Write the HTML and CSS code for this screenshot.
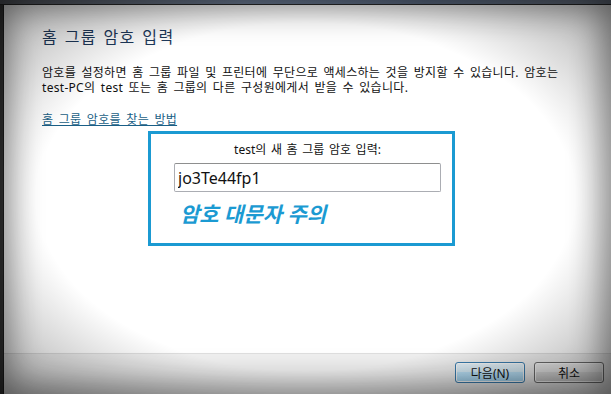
FILE: index.html
```html
<!DOCTYPE html>
<html lang="ko">
  <head>
    <meta charset="UTF-8" />
    <meta name="viewport" content="width=device-width, initial-scale=1.0" />
    <title>홈 그룹 암호 입력</title>
    <link rel="stylesheet" href="styles.css">
  </head>
  <body>
    <div class="topbar"></div>

    <div class="window">
      <div class="main">
        <h1>홈 그룹 암호 입력</h1>
        <p class="desc">
          암호를 설정하면 홈 그룹 파일 및 프린터에 무단으로 액세스하는 것을 방지할 수 있습니다. 암호는<br>
          test-PC의 test 또는 홈 그룹의 다른 구성원에게서 받을 수 있습니다.
        </p>
        <a class="help-link" href="#">홈 그룹 암호를 찾는 방법</a>

        <!-- highlighted area -->
        <div class="highlight">
          <div class="field">
            <label for="pw">test의 새 홈 그룹 암호 입력:</label>
            <input id="pw" type="text" value="jo3Te44fp1">
            <p class="caution">암호 대문자 주의</p>
          </div>
        </div>
      </div>

      <footer>
        <button class="btn btn-default">다음(N)</button>
        <button class="btn">취소</button>
      </footer>
    </div>

    <div class="vignette"></div>
  </body>
</html>
```

FILE: styles.css
```css
* {
  margin: 0;
  padding: 0;
  box-sizing: border-box;
}

body {
  font-family: "Noto Sans", "Noto Sans CJK KR", sans-serif;
  font-size: 12px;
  color: #111;
  background-color: #3a3a3a;
  width: 611px;
  height: 394px;
  overflow: hidden;
  display: flex;
  flex-direction: column;
}

.topbar {
  height: 5px;
  background: linear-gradient(90deg, #5c5f66, #6f7f98 40%, #5f6f88 70%, #707a8a);
  border-bottom: 1px solid #2a2a2a;
}

.window {
  flex: 1;
  margin-left: 3px;
  border-left: 1px solid #222;
  background-color: #fff;
  display: flex;
  flex-direction: column;
}

.main {
  flex: 1;
  padding-left: 38px;
}

h1 {
  margin-top: 22px;
  font-size: 16px;
  line-height: 21px;
  font-weight: 400;
  letter-spacing: 1.4px;
  word-spacing: 1px;
  color: #1e395b;
}

.desc {
  margin-top: 17px;
  line-height: 15px;
  letter-spacing: 0.3px;
  word-spacing: 2px;
}

.help-link {
  display: inline-block;
  margin-top: 17px;
  line-height: 15px;
  color: #1a5f86;
  letter-spacing: 0.3px;
  word-spacing: 2px;
}

.highlight {
  margin-top: 3px;
  margin-left: 106px;
  width: 307px;
  height: 115px;
  border: 3px solid #1b9ad2;
  padding: 8px 0 0 23px;
}

.field {
  width: 267px;
  display: flex;
  flex-direction: column;
}

.field label {
  text-align: center;
  line-height: 15px;
  word-spacing: 1.5px;
}

.field input {
  margin-top: 6px;
  height: 29px;
  border: 1px solid #abadb3;
  border-top-color: #8e8f8f;
  border-radius: 2px;
  padding: 0 3px;
  font-family: "Noto Sans", sans-serif;
  font-size: 16px;
  color: #111;
  outline: none;
}

.caution {
  margin-top: 8px;
  margin-left: 6px;
  font-size: 21px;
  line-height: 28px;
  font-weight: 700;
  font-style: italic;
  color: #1b9ad2;
}

footer {
  height: 41px;
  border-top: 1px solid #dfdfdf;
  background-color: #f0f0f0;
  display: flex;
  justify-content: flex-end;
  gap: 9px;
  padding: 8px 7px 0 0;
}

.btn {
  width: 70px;
  height: 21px;
  font-family: "Noto Sans", "Noto Sans CJK KR", sans-serif;
  font-size: 12px;
  color: #111;
  border: 1px solid #707070;
  border-radius: 3px;
  background: linear-gradient(#f2f2f2, #ebebeb 50%, #dddddd 50%, #cfcfcf);
  box-shadow: inset 0 0 0 1px #fcfcfc;
}

.btn-default {
  border-color: #3c7fb1;
  background: linear-gradient(#eaf6fd, #d9f0fc 50%, #bee6fd 50%, #a7d9f5);
}

/* photo-style darkening round the edges */
.vignette {
  position: fixed;
  top: 0;
  left: 0;
  width: 100%;
  height: 100%;
  pointer-events: none;
  background: radial-gradient(ellipse at center, rgba(0, 0, 0, 0) 62%, rgba(0, 0, 0, 0.35) 100%);
  box-shadow: inset 0 0 34px 8px rgba(0, 0, 0, 0.45);
}
```
